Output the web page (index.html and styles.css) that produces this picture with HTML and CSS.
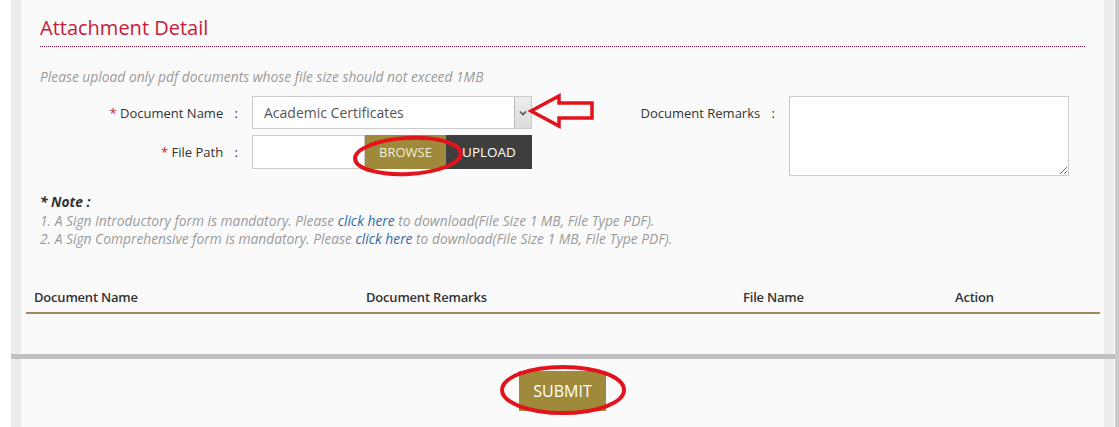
FILE: index.html
```html
<!DOCTYPE html>
<html lang="en">
<head>
  <meta charset="UTF-8">
  <meta name="viewport" content="width=device-width, initial-scale=1.0">
  <title>Attachment Detail</title>
  <link rel="stylesheet" href="styles.css">
</head>
<body>
  <div class="page">
    <div class="section">
      <h2 class="section-title">Attachment Detail</h2>
      <p class="hint">Please upload only pdf documents whose file size should not exceed 1MB</p>

      <div class="form">
        <div class="form-left">
          <label class="lbl"><span class="req">*</span> Document Name <span class="colon">:</span></label>
          <div class="select-wrap">
            <select class="select">
              <option>Academic Certificates</option>
            </select>
            <span class="select-arrow">
              <svg width="8" height="6" viewBox="0 0 8 6"><path d="M1 1.5 L4 4.5 L7 1.5" fill="none" stroke="#555" stroke-width="1.6"/></svg>
            </span>
          </div>

          <label class="lbl"><span class="req">*</span> File Path <span class="colon">:</span></label>
          <div class="file-row">
            <input type="text" class="file-input">
            <button class="btn btn-browse">BROWSE</button>
            <button class="btn btn-upload">UPLOAD</button>
          </div>
        </div>

        <div class="form-right">
          <label class="lbl lbl-right">Document Remarks <span class="colon">:</span></label>
          <textarea class="remarks"></textarea>
        </div>
      </div>

      <div class="note">
        <div class="note-title">* Note :</div>
        <div>1. A Sign Introductory form is mandatory. Please <a href="#">click here</a> to download(File Size 1 MB, File Type PDF).</div>
        <div>2. A Sign Comprehensive form is mandatory. Please <a href="#">click here</a> to download(File Size 1 MB, File Type PDF).</div>
      </div>

      <table class="docs">
        <thead>
          <tr>
            <th class="col-name">Document Name</th>
            <th class="col-remarks">Document Remarks</th>
            <th class="col-file">File Name</th>
            <th>Action</th>
          </tr>
        </thead>
        <tbody></tbody>
      </table>
    </div>

    <div class="divider"></div>

    <div class="footer">
      <button class="btn btn-submit">SUBMIT</button>
    </div>
  </div>

  <!-- red hand-drawn marks over the screenshot -->
  <svg class="marks" width="1119" height="427" viewBox="0 0 1119 427">
    <polygon points="531,111 559,96 559,103 592,103 592,118 559,118 559,126" fill="none" stroke="#e3131c" stroke-width="3.5" stroke-linejoin="miter"/>
    <ellipse cx="408" cy="156" rx="53" ry="18" transform="rotate(-3 408 156)" fill="none" stroke="#e3131c" stroke-width="4"/>
    <ellipse cx="563" cy="390" rx="61" ry="23" fill="none" stroke="#e3131c" stroke-width="4"/>
  </svg>
</body>
</html>
```

FILE: styles.css
```css
html {
  overflow: hidden;
}
body {
  margin: 0;
  background-color: #ffffff;
  border-right: 4px solid #cbcbcb;
  font-family: "Open Sans", "Liberation Sans", sans-serif;
  color: #333;
  position: relative;
}
.page {
  margin-left: 11px;
  margin-right: 1px;
  border-left: 10px solid #ececec;
  border-right: 10px solid #ececec;
  background-color: #fafafa;
}
.section {
  padding: 17px 19px 40px 19px;
}
.section-title {
  font-size: 20px;
  font-weight: 400;
  line-height: 22px;
  color: #c8193c;
  margin: 0;
  padding-bottom: 7px;
  border-bottom: 1px dotted #8a1538;
}
.hint {
  font-size: 13.8px;
  font-style: italic;
  line-height: 18px;
  color: #9a9a9a;
  margin: 21px 0 10px 0;
}
.form {
  display: flex;
  height: 80px;
}
.form-left {
  display: grid;
  grid-template-columns: 212px 280px;
  grid-template-rows: 33px 34px;
  row-gap: 6px;
}
.form-right {
  display: flex;
  align-items: flex-start;
}
.lbl {
  font-size: 13px;
  color: #333;
  text-align: right;
  padding-right: 14px;
  display: flex;
  align-items: center;
  justify-content: flex-end;
  white-space: pre;
}
.lbl-right {
  width: 257px;
  height: 33px;
  box-sizing: border-box;
}
.req {
  color: #c8193c;
}
.colon {
  margin-left: 8px;
}
.select-wrap {
  position: relative;
}
.select {
  appearance: none;
  -webkit-appearance: none;
  width: 100%;
  height: 33px;
  border: 1px solid #cccccc;
  border-radius: 0;
  background-color: #ffffff;
  font-family: inherit;
  font-size: 14px;
  color: #555;
  padding: 0 0 0 11px;
  margin: 0;
}
.select-arrow {
  position: absolute;
  top: 1px;
  right: 1px;
  width: 16px;
  height: 31px;
  background: linear-gradient(#ececec, #dcdcdc);
  border-left: 1px solid #b9b9b9;
  display: flex;
  align-items: center;
  justify-content: center;
}
.file-row {
  display: flex;
}
.file-input {
  width: 113px;
  height: 34px;
  box-sizing: border-box;
  border: 1px solid #cccccc;
  background-color: #ffffff;
  margin: 0;
}
.btn {
  border: none;
  border-radius: 0;
  font-family: inherit;
  cursor: pointer;
  margin: 0;
}
.btn-browse {
  width: 81px;
  background-color: #9f8a3b;
  color: #f3ecd6;
  font-size: 13px;
}
.btn-upload {
  width: 86px;
  background-color: #3e3e3e;
  color: #ffffff;
  font-size: 13.5px;
}
.remarks {
  width: 280px;
  height: 80px;
  box-sizing: border-box;
  border: 1px solid #cccccc;
  background-color: #ffffff;
  margin: 0;
  resize: both;
}
.note {
  margin-top: 17px;
  font-size: 13.8px;
  font-style: italic;
  line-height: 18.5px;
  color: #9a9a9a;
}
.note-title {
  font-weight: 700;
  color: #333;
}
.note a {
  color: #2f6aa6;
  text-decoration: none;
}
.docs {
  width: 1074px;
  margin: 39px 0 0 -14px;
  border-collapse: collapse;
}
.docs th {
  text-align: left;
  font-size: 13px;
  font-weight: 600;
  letter-spacing: -0.2px;
  color: #333;
  line-height: 18px;
  padding: 0 8px 6px 8px;
  border-bottom: 2px solid #9b8c58;
}
.col-name {
  width: 316px;
}
.col-remarks {
  width: 361px;
}
.col-file {
  width: 196px;
}
.divider {
  height: 5px;
  background-color: #c0c0c0;
  margin: 0 -15px 0 -10px;
}
.footer {
  padding: 12px 0 20px 0;
  display: flex;
  justify-content: center;
}
.btn-submit {
  width: 87px;
  height: 40px;
  background-color: #9f8a3b;
  color: #ffffff;
  font-size: 16px;
}
.marks {
  position: absolute;
  top: 0;
  left: 0;
  pointer-events: none;
}
```
